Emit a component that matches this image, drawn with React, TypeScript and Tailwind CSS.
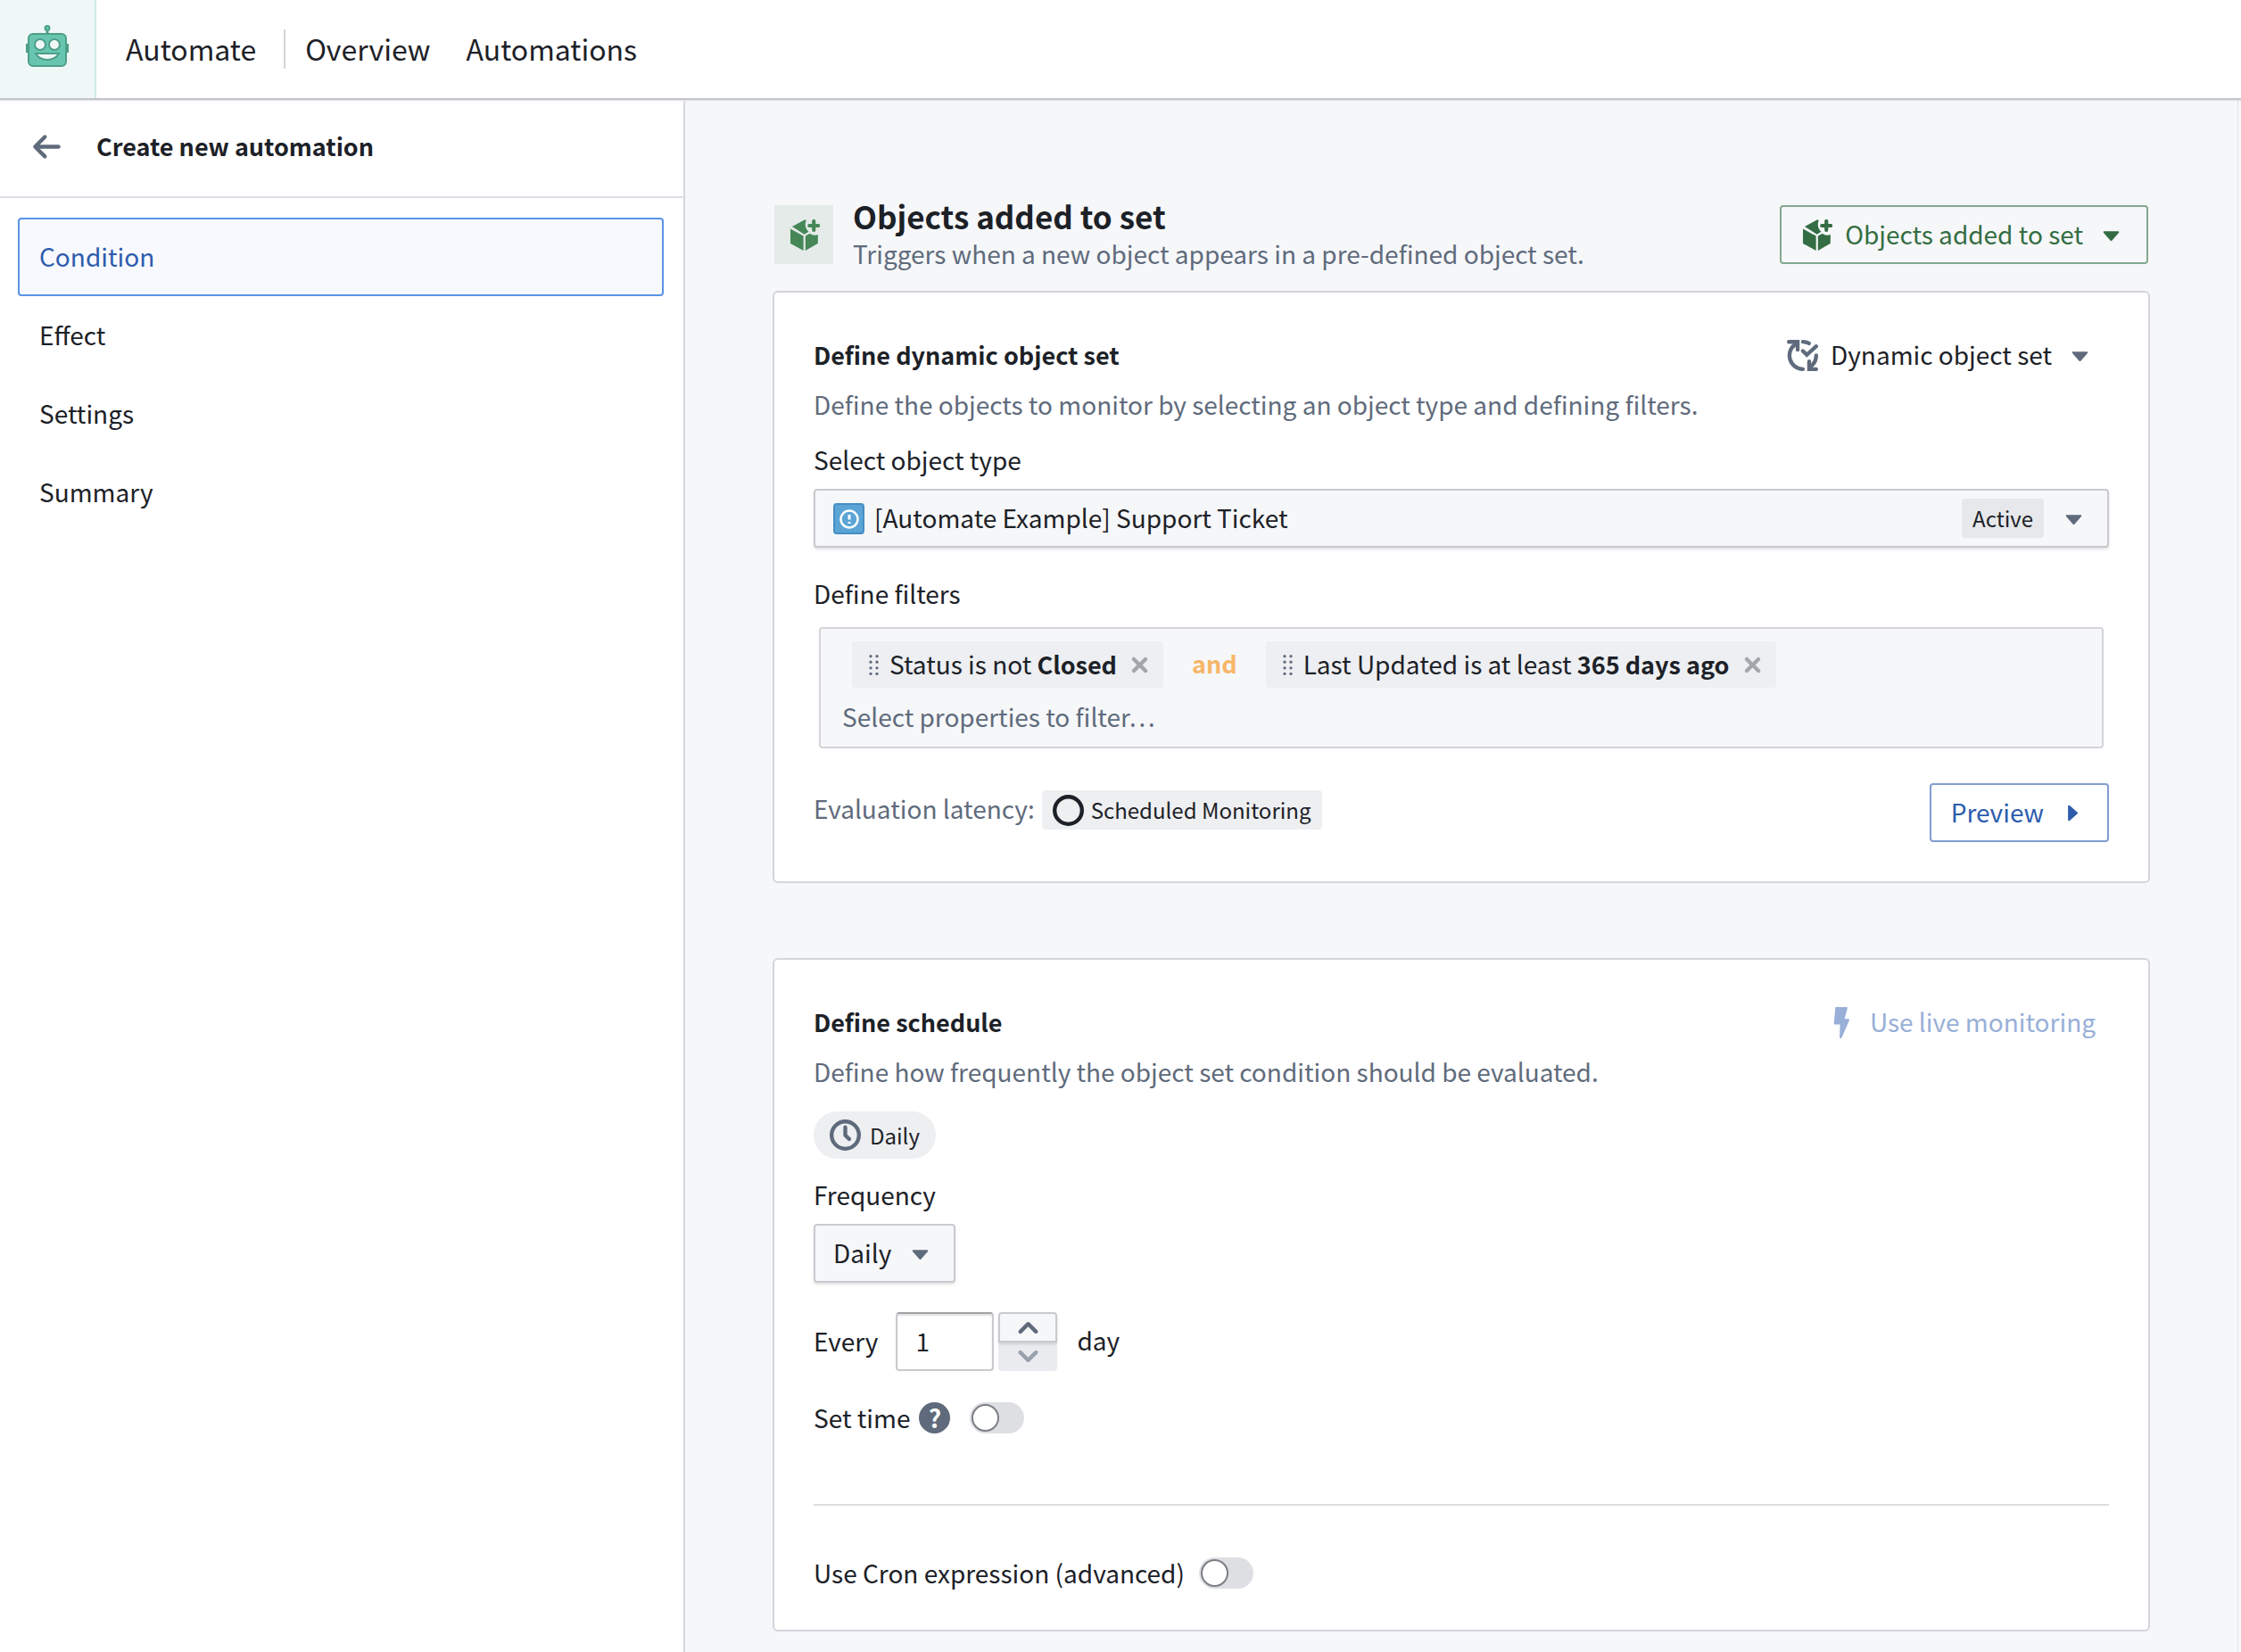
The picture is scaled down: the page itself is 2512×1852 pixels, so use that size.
import type { ReactNode } from 'react'

const CARET_DOWN =
  'M12 6.5c0-.28-.22-.5-.5-.5h-7a.495.495 0 00-.37.83l3.5 4c.09.1.22.17.37.17s.28-.07.37-.17l3.5-4c.08-.09.13-.2.13-.33z'
const CARET_RIGHT = 'M11 8c0-.15-.07-.28-.17-.37l-4-3.5A.495.495 0 006 4.5v7a.495.495 0 00.83.37l4-3.5c.1-.09.17-.22.17-.37z'
const ARROW_LEFT =
  'M13.99 6.99H4.41L7.7 3.7a1.003 1.003 0 00-1.42-1.42l-5 5a1.014 1.014 0 000 1.42l5 5a1.003 1.003 0 001.42-1.42L4.41 8.99H14c.55 0 1-.45 1-1s-.46-1-1.01-1z'
const SMALL_CROSS =
  'M9.41 8l2.29-2.29c.19-.18.3-.43.3-.71a1.003 1.003 0 00-1.71-.71L8 6.59l-2.29-2.3a1.003 1.003 0 00-1.42 1.42L6.59 8 4.3 10.29c-.19.18-.3.43-.3.71a1.003 1.003 0 001.71.71L8 9.41l2.29 2.29c.18.19.43.3.71.3a1.003 1.003 0 00.71-1.71L9.41 8z'
const CHEVRON_UP =
  'M12.71 9.29l-4-4C8.53 5.11 8.28 5 8 5s-.53.11-.71.29l-4 4a1.003 1.003 0 001.42 1.42L8 7.41l3.29 3.29c.18.19.43.3.71.3a1.003 1.003 0 00.71-1.71z'
const CHEVRON_DOWN =
  'M12 5c-.28 0-.53.11-.71.29L8 8.59l-3.29-3.3a1.003 1.003 0 00-1.42 1.42l4 4c.18.18.43.29.71.29s.53-.11.71-.29l4-4A1.003 1.003 0 0012 5z'
const LIGHTNING = 'M5.2 0h5.3c.3 0 .5.3.4.6L9.4 6.1h2c.4 0 .6.4.4.7L8 15.7c-.2.4-1.1.4-1.1-.1l.2-6.7H4.4c-.3 0-.5-.2-.4-.5L4.7.4c0-.2.2-.4.5-.4z'

function Icon({ path, className = '', children }: { path?: string; className?: string; children?: ReactNode }) {
  return (
    <svg viewBox="0 0 16 16" className={`size-[35px] shrink-0 ${className}`} fill="currentColor" aria-hidden="true">
      {path ? <path d={path} /> : children}
    </svg>
  )
}

function CubeAddIcon({ className }: { className?: string }) {
  return (
    <Icon className={className}>
      <path d="M.9 4.8l6.7 3.7V16L1.2 12.5a.7.7 0 01-.3-.5z" />
      <path d="M8.6 8.5l2.3-1.3c1 .9 2.6 1.2 4.1.6V12a.7.7 0 01-.3.5L8.6 16z" />
      <path d="M1.8 3.7L7.7.4c.5-.3.9-.2 1.3 0-.8 1.8-.6 4.3 1.3 5.900L8 7.600z" />
      <path d="M12.900.900v4.600M10.600 3.200h4.600" stroke="currentColor" strokeWidth="1.900" strokeLinecap="round" />
    </Icon>
  )
}

function DynamicSetIcon({ className }: { className?: string }) {
  return (
    <Icon className={className}>
      <g fill="none" stroke="currentColor" strokeWidth="2" strokeLinecap="round">
        <path d="M4.400 2.200A7 7 0 008.200 15" />
        <path d="M1 1h4.500v4" />
        <path d="M8.200 1a7 7 0 013.100.800" />
        <path d="M15 8a7 7 0 01-2.800 5.600" />
        <path d="M11.400 11v4H15" />
        <path d="M8.200 5.700l2 2L15 3.300" />
      </g>
    </Icon>
  )
}

function RobotIcon() {
  return (
    <svg viewBox="0 0 50 50" className="size-[50px]" aria-hidden="true">
      <g fill="#68c6b0" stroke="#4d9e87" strokeWidth="2">
        <path d="M25 7v4" strokeWidth="3" />
        <circle cx="25" cy="3.500" r="2.500" />
        <path d="M4 22H2v8h2M46 22h2v8h-2" />
        <rect x="4" y="10" width="42" height="36" rx="5" />
        <circle cx="17" cy="22" r="6" fill="#eff8f7" />
        <circle cx="33" cy="22" r="6" fill="#eff8f7" />
        <path d="M12 32h26c-2.500 4.500-7 7-13 7s-10.500-2.500-13-7z" fill="#eff8f7" />
      </g>
    </svg>
  )
}

function DragHandle() {
  return (
    <Icon className="text-[#5f6b7c]">
      {[3.5, 6.5, 9.5, 12.5].map((y) => (
        <g key={y}>
          <circle cx="6.400" cy={y} r="0.750" />
          <circle cx="9.600" cy={y} r="0.750" />
        </g>
      ))}
    </Icon>
  )
}

function Card({ title, description, action, children }: { title: string; description: string; action: ReactNode; children: ReactNode }) {
  return (
    <section className="rounded-md border-2 border-[#d3d5d9] bg-white px-11 pt-[37px] pb-11">
      <div className="flex h-[66px] items-center justify-between">
        <h2 className="text-[27px] font-bold">{title}</h2>
        {action}
      </div>
      <p className="mt-0.5 text-[#5f6b7c]">{description}</p>
      {children}
    </section>
  )
}

function FilterChip({ label, value }: { label: string; value: string }) {
  return (
    <div className="flex h-[52px] items-center rounded-sm bg-[#edeff2] pr-[9px] pl-[7px]">
      <DragHandle />
      <span className="pb-0.5 whitespace-pre">
        {label} <strong className="text-[27px]">{value}</strong>
      </span>
      <button type="button" aria-label={`Remove ${label} ${value}`} className="ml-2 text-[#a3a6ab]">
        <Icon path={SMALL_CROSS} />
      </button>
    </div>
  )
}

function Switch({ id }: { id: string }) {
  return (
    <input
      id={id}
      type="checkbox"
      role="switch"
      className="flex h-[35px] w-[61px] shrink-0 appearance-none items-center rounded-full bg-[#dddfe3] pl-0.5 before:size-[31px] before:rounded-full before:border-2 before:border-[#7b7e83] before:bg-white checked:bg-[#2d72d2] checked:before:translate-x-[26px]"
    />
  )
}

const steps = ['Condition', 'Effect', 'Settings', 'Summary']

export default function App() {
  return (
    <div className="flex min-h-screen flex-col bg-[#f6f7f9] font-['Noto_Sans_CJK_SC','Noto_Sans',sans-serif] text-[28px] leading-10 text-[#1c2127]">
      <header className="relative z-10 flex h-[110px] items-center bg-white text-[32px] shadow-[0_2px_0_#c3c5c9,0_3px_1px_#e3e5e8]">
        <a href="#home" aria-label="Home" className="flex h-full w-[108px] items-center justify-center border-r-2 border-[#cdebe3] bg-[#eff8f7] pb-1">
          <RobotIcon />
        </a>
        <span className="ml-[33px] pb-[3px]">Automate</span>
        <nav className="ml-[31px] flex h-11 items-center gap-10 border-l-2 border-[#d3d5d9] pb-[3px] pl-[22px]">
          <a href="#overview">Overview</a>
          <a href="#automations">Automations</a>
        </nav>
      </header>

      <div className="flex flex-1">
        <aside className="w-[768px] shrink-0 border-r-2 border-[#d5d8dd] bg-white">
          <div className="flex h-28 items-center border-b-2 border-[#dce0e5] pb-0.5 pl-[35px]">
            <button type="button" aria-label="Back" className="text-[#5f6b7c]">
              <Icon path={ARROW_LEFT} />
            </button>
            <h1 className="ml-[38px] text-[27px] font-bold">Create new automation</h1>
          </div>
          <nav className="mt-[22px] flex flex-col pr-[22px] pl-5">
            {steps.map((step, i) => (
              <a
                key={step}
                href={`#${step.toLowerCase()}`}
                aria-current={i === 0 ? 'step' : undefined}
                className={`flex h-[88px] items-center rounded-sm border-2 pb-[3px] pl-[22px] ${
                  i === 0 ? 'border-[#5b93e6] bg-[#f8f9fe] text-[#2d5cad]' : 'border-transparent'
                }`}
              >
                {step}
              </a>
            ))}
          </nav>
        </aside>

        <main className="mr-[3px] min-w-0 flex-1 border-r border-[#e1e3e7] px-[98px] pt-[112px] pb-[22px]">
          <div className="flex items-center justify-between">
            <div className="flex items-center">
              <span className="ml-0.5 flex size-[66px] items-center justify-center bg-[#e5ebe9] text-[#468758]">
                <CubeAddIcon />
              </span>
              <div className="ml-[22px]">
                <div className="text-[35px] font-bold">Objects added to set</div>
                <p className="mt-0.5 text-[#5f6b7c]">Triggers when a new object appears in a pre-defined object set.</p>
              </div>
            </div>
            <button
              type="button"
              className="mr-0.5 flex h-[66px] items-center rounded-sm border-2 border-[#83a88f] px-[22px] text-[#346d43]"
            >
              <CubeAddIcon />
              <span className="mr-3.5 ml-3.5 pb-0.5">Objects added to set</span>
              <Icon path={CARET_DOWN} />
            </button>
          </div>

          <div className="mt-[22px] flex flex-col gap-[84px]">
            <Card
              title="Define dynamic object set"
              description="Define the objects to monitor by selecting an object type and defining filters."
              action={
                <button type="button" className="flex h-[66px] items-center px-[15px]">
                  <DynamicSetIcon className="text-[#5f6b7c]" />
                  <span className="mr-3.5 ml-3.5 pb-0.5">Dynamic object set</span>
                  <Icon path={CARET_DOWN} className="text-[#5f6b7c]" />
                </button>
              }
            >
              <label htmlFor="object-type" className="mt-[22px] block">
                Select object type
              </label>
              <div className="mt-[13px] flex h-[66px] items-center rounded-sm border-2 border-[#c8cace] bg-[#f6f7f9] px-5 shadow-[0_2px_3px_rgba(17,20,24,0.12)]">
                <svg viewBox="0 0 35 35" className="size-[35px] shrink-0" aria-hidden="true">
                  <rect x="1" y="1" width="33" height="33" rx="3" fill="#5aa4d6" stroke="#458fc6" strokeWidth="2" />
                  <circle cx="18" cy="18" r="9.500" fill="none" stroke="#fff" strokeWidth="2.500" />
                  <path d="M18 13v5.500M18 21v2" stroke="#fff" strokeWidth="3" />
                </svg>
                <select id="object-type" className="ml-[11px] min-w-0 flex-1 appearance-none bg-transparent pb-0.5">
                  <option>[Automate Example] Support Ticket</option>
                </select>
                <span className="flex h-11 items-center rounded-sm bg-[#e6e8eb] px-3 text-2xl">Active</span>
                <Icon path={CARET_DOWN} className="pointer-events-none ml-4 text-[#5f6b7c]" />
              </div>

              <label htmlFor="filters" className="mt-[31px] block">
                Define filters
              </label>
              <div className="mx-1.5 mt-[18px] rounded-sm border-2 border-[#d3d5d9] bg-[#f6f7f9] py-3.5">
                <div className="flex items-center gap-8 pl-[35px]">
                  <FilterChip label="Status is not" value="Closed" />
                  <span className="pb-0.5 text-[27px] font-bold text-[#f7b567]">and</span>
                  <FilterChip label="Last Updated is at least" value="365 days ago" />
                </div>
                <input
                  id="filters"
                  type="text"
                  placeholder="Select properties to filter…"
                  className="mt-3 block h-10 w-full bg-transparent pl-6 placeholder:text-[#5f6b7c]"
                />
              </div>

              <div className="mt-[39px] flex items-start justify-between">
                <div className="flex items-center pt-2">
                  <span className="pb-1 text-[#5f6b7c]">Evaluation latency:</span>
                  <span className="ml-2 flex h-11 items-center gap-2 rounded-sm bg-[#eeeff1] px-3 text-2xl">
                    <Icon>
                      <circle cx="8" cy="8" r="7" fill="none" stroke="currentColor" strokeWidth="2" />
                    </Icon>
                    Scheduled Monitoring
                  </span>
                </div>
                <button
                  type="button"
                  className="flex h-[66px] items-center gap-3.5 rounded-sm border-2 border-[#819dd0] px-[22px] text-[#2d5cad]"
                >
                  <span className="pb-0.5">Preview</span>
                  <Icon path={CARET_RIGHT} />
                </button>
              </div>
            </Card>

            <Card
              title="Define schedule"
              description="Define how frequently the object set condition should be evaluated."
              action={
                <button type="button" disabled className="flex h-[66px] items-center gap-3.5 px-[15px] text-[#98afd8]">
                  <Icon path={LIGHTNING} />
                  <span className="pb-0.5">Use live monitoring</span>
                </button>
              }
            >
              <div className="mt-[25px] flex">
                <span className="flex h-[53px] items-center gap-2.5 rounded-full bg-[#eeeff1] px-[18px] text-2xl">
                  <Icon className="text-[#5f6b7c]">
                    <g fill="none" stroke="currentColor" strokeWidth="2">
                      <circle cx="8" cy="8" r="7" />
                      <path d="M8 4v4.100l2 1.900" strokeLinecap="round" strokeLinejoin="round" />
                    </g>
                  </Icon>
                  Daily
                </span>
              </div>

              <label htmlFor="frequency" className="mt-5 block">
                Frequency
              </label>
              <div className="mt-[13px] flex">
                <div className="flex h-[66px] items-center rounded-sm border-2 border-[#c8cace] bg-[#f6f7f9] px-5 shadow-[0_2px_3px_rgba(17,20,24,0.12)]">
                  <select id="frequency" className="appearance-none bg-transparent pb-0.5">
                    <option>Daily</option>
                  </select>
                  <Icon path={CARET_DOWN} className="pointer-events-none ml-3.5 text-[#5f6b7c]" />
                </div>
              </div>

              <div className="mt-[33px] flex h-[66px] items-center">
                <label htmlFor="interval" className="pb-0.5">
                  Every
                </label>
                <input
                  id="interval"
                  type="text"
                  inputMode="numeric"
                  defaultValue="1"
                  className="ml-5 h-full w-[110px] rounded-sm border-2 border-[#c8cace] border-t-[#a0a2a6] bg-white pb-0.5 pl-5 shadow-[inset_0_2px_2px_rgba(17,20,24,0.12)]"
                />
                <div className="ml-[5px] flex h-full w-[66px] flex-col">
                  <button
                    type="button"
                    aria-label="Increase"
                    className="relative flex h-[34px] items-center justify-center rounded-t-sm border-2 border-[#c8cace] bg-[#f6f7f9] text-[#5f6b7c] shadow-[0_2px_3px_rgba(17,20,24,0.12)]"
                  >
                    <Icon path={CHEVRON_UP} />
                  </button>
                  <button
                    type="button"
                    aria-label="Decrease"
                    disabled
                    className="flex h-8 items-center justify-center rounded-b-sm bg-[#e9ebef] pb-0.5 text-[#9aa1ad]"
                  >
                    <Icon path={CHEVRON_DOWN} />
                  </button>
                </div>
                <span className="ml-[22px] pb-1">day</span>
              </div>

              <div className="mt-[35px] flex h-[35px] items-center">
                <label htmlFor="set-time" className="pb-0.5">
                  Set time
                </label>
                <button
                  type="button"
                  aria-label="Help"
                  className="mr-[22px] ml-2.5 flex size-[35px] items-center justify-center rounded-full bg-[#5f6b7c] pb-0.5 font-bold text-white"
                >
                  ?
                </button>
                <Switch id="set-time" />
              </div>

              <hr className="mt-[79px] border-t-2 border-[#dcdee1]" />

              <div className="mt-[58px] mb-0.5 flex h-[35px] items-center gap-4">
                <label htmlFor="cron" className="pb-0.5">
                  Use Cron expression (advanced)
                </label>
                <Switch id="cron" />
              </div>
            </Card>
          </div>
        </main>
      </div>
    </div>
  )
}
